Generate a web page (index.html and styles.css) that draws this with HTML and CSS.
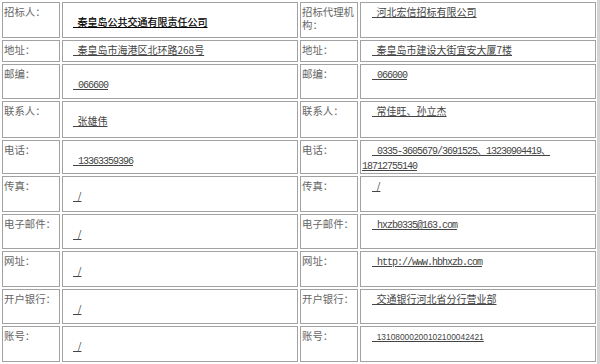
FILE: index.html
```html
<!DOCTYPE html>
<html lang="zh-CN">
<head>
<meta charset="utf-8">
<title>招标信息</title>
<link rel="stylesheet" href="styles.css">
</head>
<body>
<table class="info">
  <colgroup>
    <col class="c-label">
    <col class="c-value">
    <col class="c-label">
    <col class="c-value">
  </colgroup>
  <tr>
    <td class="label">招标人：</td>
    <td class="value lower"><span class="u strong">&nbsp;&nbsp;秦皇岛公共交通有限责任公司</span></td>
    <td class="label">招标代理机构：</td>
    <td class="value"><span class="u">&nbsp;&nbsp;河北宏信招标有限公司</span></td>
  </tr>
  <tr>
    <td class="label">地址：</td>
    <td class="value"><span class="u">&nbsp;&nbsp;秦皇岛市海港区北环路268号</span></td>
    <td class="label">地址：</td>
    <td class="value"><span class="u">&nbsp;&nbsp;秦皇岛市建设大街宜安大厦7楼</span></td>
  </tr>
  <tr>
    <td class="label">邮编：</td>
    <td class="value lower"><span class="u mono">&nbsp;066600</span></td>
    <td class="label">邮编：</td>
    <td class="value"><span class="u mono">&nbsp;066000</span></td>
  </tr>
  <tr>
    <td class="label">联系人：</td>
    <td class="value lower"><span class="u">&nbsp;&nbsp;张雄伟</span></td>
    <td class="label">联系人：</td>
    <td class="value"><span class="u">&nbsp;&nbsp;常佳旺、孙立杰</span></td>
  </tr>
  <tr>
    <td class="label">电话：</td>
    <td class="value lower"><span class="u mono">&nbsp;13363359396</span></td>
    <td class="label">电话：</td>
    <td class="value"><span class="u mono">&nbsp;0335-3605679/3691525、13230904419、 18712755140</span></td>
  </tr>
  <tr>
    <td class="label">传真：</td>
    <td class="value lower"><span class="u">&nbsp;&nbsp;/</span></td>
    <td class="label">传真：</td>
    <td class="value"><span class="u">&nbsp;&nbsp;/</span></td>
  </tr>
  <tr>
    <td class="label">电子邮件：</td>
    <td class="value lower"><span class="u">&nbsp;&nbsp;/</span></td>
    <td class="label">电子邮件：</td>
    <td class="value"><span class="u mono">&nbsp;hxzb0335@163.com</span></td>
  </tr>
  <tr>
    <td class="label">网址：</td>
    <td class="value lower"><span class="u">&nbsp;&nbsp;/</span></td>
    <td class="label">网址：</td>
    <td class="value"><span class="u mono">&nbsp;http://www.hbhxzb.com</span></td>
  </tr>
  <tr>
    <td class="label">开户银行：</td>
    <td class="value lower"><span class="u">&nbsp;&nbsp;/</span></td>
    <td class="label">开户银行：</td>
    <td class="value"><span class="u">&nbsp;&nbsp;交通银行河北省分行营业部</span></td>
  </tr>
  <tr>
    <td class="label">账号：</td>
    <td class="value lower"><span class="u">&nbsp;&nbsp;/</span></td>
    <td class="label">账号：</td>
    <td class="value"><span class="u num">&nbsp;&nbsp;13108000200102100042421</span></td>
  </tr>
</table>
</body>
</html>
```
FILE: styles.css
```css
html {
  background: linear-gradient(to right, #ffffff 597px, #d4d4d4 597px);
  min-height: 100%;
}
body {
  margin: 0;
  font-family: "Noto Sans CJK SC", "Liberation Sans", sans-serif;
  font-size: 10px;
  line-height: 13px;
  color: #444;
}
.info {
  width: 598px;
  table-layout: fixed;
  border-collapse: separate;
  border-spacing: 2px;
  margin: 0;
}
.c-label { width: 58px; }
.c-value { width: 236px; }
.info td {
  box-sizing: border-box;
  border: 1px solid #a2a2a2;
  padding: 2px 1px 0 1px;
  vertical-align: top;
  overflow: hidden;
}
.info tr:nth-child(1) { height: 36px; }
.info tr:nth-child(2) { height: 22px; }
.info tr:nth-child(3) { height: 35px; }
.info tr:nth-child(4) { height: 37px; }
.info tr:nth-child(5) { height: 34px; }
.info tr:nth-child(6) { height: 36px; }
.info tr:nth-child(7) { height: 35px; }
.info tr:nth-child(8) { height: 36px; }
.info tr:nth-child(9) { height: 35px; }
.info tr:nth-child(10) { height: 36px; }
.label {
  color: #666;
  font-size: 10.4px;
}
.value {
  text-indent: 9px;
}
.info td.value:nth-child(4) {
  text-indent: 10px;
}
.info td.lower {
  padding-top: 12px;
}
.u {
  text-decoration: underline;
  text-underline-offset: 1px;
}
.strong {
  color: #000;
  -webkit-text-stroke: 0.2px #000;
}
.mono {
  font-family: "Liberation Mono", "Noto Sans CJK SC", monospace;
  font-size: 10px;
  letter-spacing: -1px;
}
.num {
  font-family: "Liberation Sans", sans-serif;
  font-size: 8.4px;
}
```
